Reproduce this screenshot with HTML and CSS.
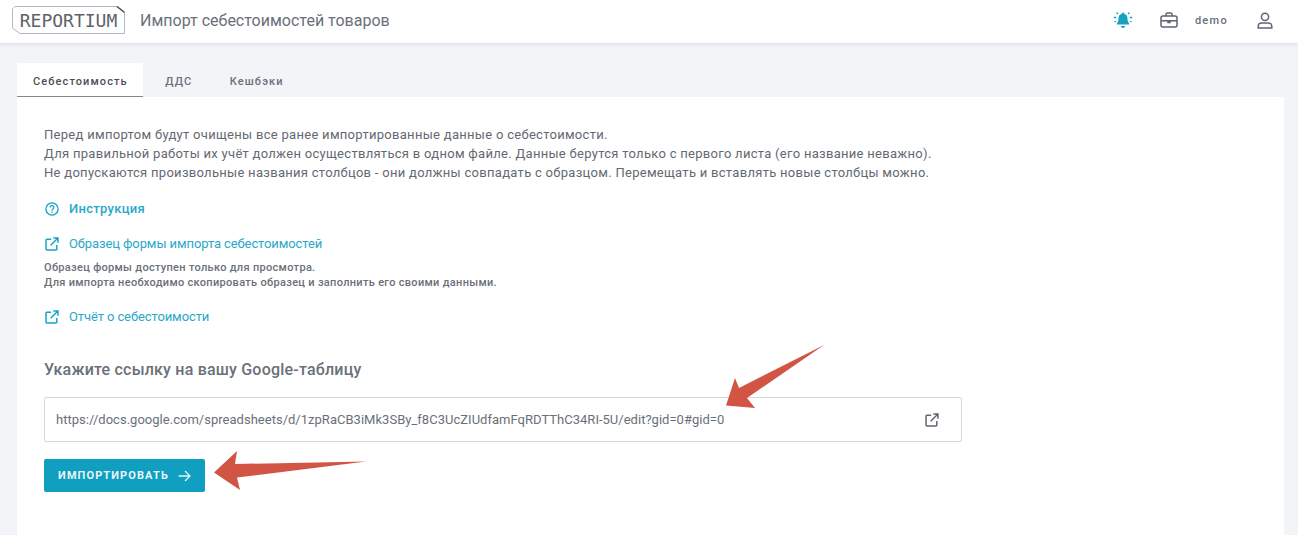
FILE: index.html
```html
<!DOCTYPE html>
<html lang="ru">
<head>
<meta charset="utf-8">
<title>Импорт себестоимостей товаров</title>
<link rel="stylesheet" href="styles.css">
</head>
<body>
<header class="topbar">
  <div class="brand">
    <div class="logo">
      <svg class="logo-frame" width="113" height="28" viewBox="0 0 113 28" fill="none"><path d="M3 .5H105L112.500 6.500V27.500H8L.5 22V3Z" stroke="#b4b7bd" stroke-width="1"/><path d="M105 .5L112.500 6.500" stroke="#4a4f57" stroke-width="1.500"/></svg>
      <span class="logo-text">REPORTIUM</span>
    </div>
    <h1 class="page-title">Импорт себестоимостей товаров</h1>
  </div>
  <div class="top-actions">
    <svg class="bell" width="20" height="18" viewBox="0 0 20 18" fill="#17a2c4"><path d="M10 1.500a1.200 1.200 0 0 1 1.200 1.200c2.300.6 3.300 2.500 3.300 4.800 0 2.600.7 3.900 1.700 5v1H3.800v-1c1-1.100 1.700-2.400 1.700-5 0-2.300 1-4.200 3.300-4.800A1.200 1.200 0 0 1 10 1.500Z"/><path d="M8 15h4a2 2 0 0 1-4 0Z"/><path d="M3.500 1.500 5 3M16.500 1.500 15 3M.8 6.500h2.400M16.800 6.500h2.400M1.500 11l1.500-.8M18.500 11 17 10.200" stroke="#17a2c4" stroke-width="1.300" fill="none"/></svg>
    <svg class="case" width="18" height="16" viewBox="0 0 18 16" fill="none" stroke="#5f6670" stroke-width="1.500"><rect x="1" y="4" width="16" height="11" rx="2"/><path d="M6 4V2.300C6 1.600 6.500 1 7.200 1h3.600c.7 0 1.200.6 1.200 1.300V4M1 8.700h16"/><path d="M8 8.700h2v1.800H8z" fill="#5f6670"/></svg>
    <span class="user-name">demo</span>
    <svg class="person" width="16" height="17" viewBox="0 0 16 17" fill="none" stroke="#5f6670" stroke-width="1.500"><circle cx="8" cy="4.800" r="3.600"/><path d="M1.200 16v-1.800c0-2 1.600-3.200 3.500-3.200h6.600c1.900 0 3.500 1.200 3.500 3.200V16Z"/></svg>
  </div>
</header>

<main class="content">
  <nav class="tabs">
    <a class="tab tab-active">Себестоимость</a>
    <a class="tab">ДДС</a>
    <a class="tab">Кешбэки</a>
  </nav>
  <section class="card">
    <div class="intro">
      <p>Перед импортом будут очищены все ранее импортированные данные о себестоимости.</p>
      <p>Для правильной работы их учёт должен осуществляться в одном файле. Данные берутся только с первого листа (его название неважно).</p>
      <p>Не допускаются произвольные названия столбцов - они должны совпадать с образцом. Перемещать и вставлять новые столбцы можно.</p>
    </div>

    <a class="link link-help">
      <svg width="14" height="14" viewBox="0 0 16 16" fill="none" stroke="#17a2c4" stroke-width="1.500"><circle cx="8" cy="8" r="7"/><path d="M5.900 6.300a2.100 2.100 0 1 1 3.200 1.700c-.8.400-1.100.8-1.100 1.600"/><path d="M8 10.800v1.400"/></svg>
      <span>Инструкция</span>
    </a>

    <a class="link link-sample">
      <svg width="14" height="14" viewBox="0 0 16 16" fill="none" stroke="#17a2c4" stroke-width="1.700"><path d="M7 2.500H2.200a1 1 0 0 0-1 1v10.300a1 1 0 0 0 1 1h10.300a1 1 0 0 0 1-1V9"/><path d="M6.500 9.500 14.500 1.500M9.500 1.200h5.300v5.300"/></svg>
      <span>Образец формы импорта себестоимостей</span>
    </a>
    <div class="note">
      <p>Образец формы доступен только для просмотра.</p>
      <p>Для импорта необходимо скопировать образец и заполнить его своими данными.</p>
    </div>

    <a class="link link-report">
      <svg width="14" height="14" viewBox="0 0 16 16" fill="none" stroke="#17a2c4" stroke-width="1.700"><path d="M7 2.500H2.200a1 1 0 0 0-1 1v10.300a1 1 0 0 0 1 1h10.300a1 1 0 0 0 1-1V9"/><path d="M6.500 9.500 14.500 1.500M9.500 1.200h5.300v5.300"/></svg>
      <span>Отчёт о себестоимости</span>
    </a>

    <h2 class="section-title">Укажите ссылку на вашу Google-таблицу</h2>

    <div class="url-field">
      <span class="url-text">https://docs.google.com/spreadsheets/d/1zpRaCB3iMk3SBy_f8C3UcZIUdfamFqRDTThC34RI-5U/edit?gid=0#gid=0</span>
      <svg width="14" height="14" viewBox="0 0 16 16" fill="none" stroke="#5f6670" stroke-width="1.700"><path d="M7 2.500H2.200a1 1 0 0 0-1 1v10.300a1 1 0 0 0 1 1h10.300a1 1 0 0 0 1-1V9"/><path d="M6.500 9.500 14.500 1.500M9.500 1.200h5.300v5.300"/></svg>
    </div>

    <button class="import-btn" type="button">
      <span>ИМПОРТИРОВАТЬ</span>
      <svg width="13" height="12" viewBox="0 0 13 12" fill="none" stroke="#e4f4f8" stroke-width="1.300"><path d="M.5 6h11.500M7 1l5 5-5 5"/></svg>
    </button>
  </section>
</main>

<svg class="arrows" width="1298" height="535" viewBox="0 0 1298 535" fill="#d25445">
  <path d="M726 405.500 735 378 739 388 824 345 747 398 755 408Z"/>
  <path d="M214 472.500 237 451 235 464 366 461.500 237 477.500 240 490Z"/>
</svg>
</body>
</html>
```

FILE: styles.css
```css
* { box-sizing: border-box; }
html, body { margin: 0; height: 535px; overflow: hidden; }
body {
  position: relative;
  background: #f3f4f8;
  font-family: Roboto, "Liberation Sans", sans-serif;
  color: #5f6670;
}
p { margin: 0; }

.topbar {
  height: 43px;
  background: #fff;
  box-shadow: 0 1px 4px rgba(60, 66, 80, .14);
  display: flex;
  align-items: center;
  justify-content: space-between;
  padding: 0 25px 0 12px;
}
.brand { display: flex; align-items: center; gap: 15px; margin-top: -3px; }
.logo {
  position: relative;
  width: 113px;
  height: 28px;
  display: flex;
  align-items: center;
  justify-content: center;
}
.logo-frame { position: absolute; left: 0; top: 0; }
.logo-text {
  position: relative;
  font-family: "DejaVu Sans Mono", "Liberation Mono", monospace;
  font-size: 18px;
  color: #5d636b;
}
.page-title {
  margin: 0;
  font-size: 16px;
  font-weight: 400;
  color: #6a7079;
}
.top-actions { display: flex; align-items: center; margin-top: -3px; }
.bell { margin-right: 27px; }
.case { margin-right: 17px; }
.user-name {
  font-size: 11px;
  font-weight: 500;
  letter-spacing: 1.300px;
  color: #6a7079;
  margin-right: 29px;
}

.content { padding: 20px 14px 0 17px; }
.tabs { display: flex; height: 34px; }
.tab {
  font-size: 11px;
  font-weight: 500;
  letter-spacing: 1.100px;
  color: #6a7079;
  padding: 12px 15px 0 16px;
  margin-right: 6.500px;
}
.tab-active {
  background: #fff;
  color: #4a505a;
  border-bottom: 1px solid #7f8791;
}
.card {
  background: #fff;
  height: 460px;
  padding: 28px 26px 28px 27px;
  display: flex;
  flex-direction: column;
  align-items: flex-start;
}
.intro { font-size: 13px; line-height: 19px; letter-spacing: .29px; color: #636972; }

.link {
  display: flex;
  align-items: center;
  gap: 10px;
  font-size: 13px;
  line-height: 18px;
  letter-spacing: -.1px;
  color: #2aa8c8;
}
.link svg { margin-left: 1px; flex: none; }
.link-help { margin-top: 18px; font-weight: 500; letter-spacing: .3px; }
.link-sample { margin-top: 17px; }
.link-report { margin-top: 18px; }

.note {
  margin-top: 7px;
  font-size: 11px;
  line-height: 15px;
  font-weight: 500;
  letter-spacing: .31px;
  color: #6a7079;
}

.section-title {
  margin: 34px 0 0;
  font-size: 16px;
  line-height: 20px;
  font-weight: 500;
  color: #6a7079;
  letter-spacing: .2px;
}
.url-field {
  margin-top: 17px;
  width: 918px;
  height: 45px;
  border: 1px solid #d5d6d9;
  border-radius: 2px;
  display: flex;
  align-items: center;
  justify-content: space-between;
  padding: 0 22px 0 11px;
}
.url-text { font-size: 13px; color: #6a7079; letter-spacing: .02px; }

.import-btn {
  margin-top: 17px;
  width: 161px;
  height: 33px;
  border: 0;
  border-radius: 2px;
  background: #109fc0;
  color: #e8f6f9;
  font-family: inherit;
  font-size: 11px;
  font-weight: 700;
  letter-spacing: 1.100px;
  display: flex;
  align-items: center;
  justify-content: center;
  gap: 9px;
  padding: 0;
}

.arrows { position: absolute; left: 0; top: 0; pointer-events: none; }
```
